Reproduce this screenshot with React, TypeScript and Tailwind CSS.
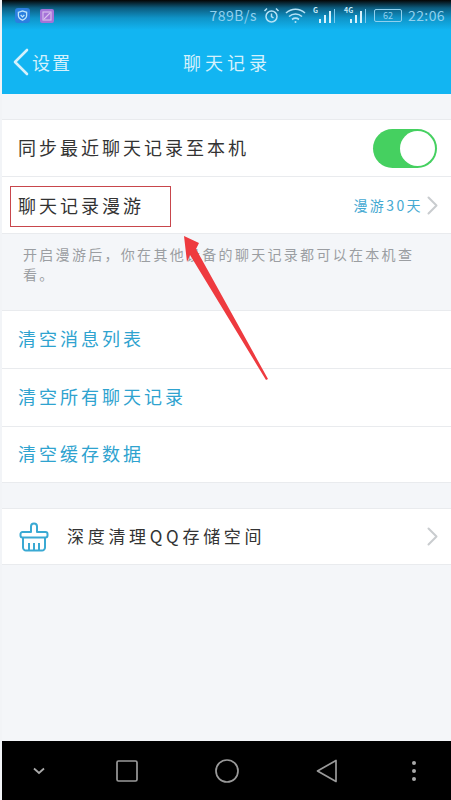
function Row({ children, h = 'h-[57px]' }: { children: React.ReactNode; h?: string }) {
  return (
    <div className={`flex items-center justify-between border-b border-[#e9ebee] bg-white pl-[16px] pr-[13px] ${h}`}>
      {children}
    </div>
  )
}

function Chevron() {
  return (
    <svg width="11" height="19" viewBox="0 0 11 19" fill="none" stroke="#c9cccf" strokeWidth="2" strokeLinecap="round" strokeLinejoin="round">
      <path d="M1.500 1.500 9.500 9.500 1.500 17.500" />
    </svg>
  )
}

function Signal({ label, className }: { label: string; className: string }) {
  return (
    <div className={`relative h-[17px] w-[23px] ${className}`}>
      <span className="absolute left-0 top-[-2px] text-[7px] font-bold leading-[10px] tracking-normal text-[#c5e9f8]">{label}</span>
      <svg className="absolute bottom-0 right-0" width="18" height="17" viewBox="0 0 18 17" fill="#d8f1fb">
        <rect x="1" y="12" width="2" height="4" />
        <rect x="6" y="8" width="2" height="8" />
        <rect x="11" y="4" width="2" height="12" />
        <rect x="16" y="2" width="1" height="14" fill="#7fcbee" />
      </svg>
    </div>
  )
}

function StatusBar() {
  return (
    <div className="flex h-[28px] items-center justify-between pl-[13px] pr-[6px] pt-[3px] text-[14px] tracking-normal text-[#8fd0ee]">
      <div className="flex items-center gap-[10px]">
        <div className="flex h-[15px] w-[15px] items-center justify-center rounded-[3px] bg-[#2b7fe0]">
          <svg width="11" height="11" viewBox="0 0 12 12" fill="none" stroke="#bfe6fb" strokeWidth="1.4">
            <path d="M1.5 2.500 6 1l4.500 1.500V6c0 2.500-2 4-4.500 5C3.500 10 1.500 8.500 1.500 6z" />
            <path d="M4 5.500 6 7.500 8 5.500" />
          </svg>
        </div>
        <div className="flex h-[14px] w-[14px] items-center justify-center rounded-[2px] bg-[#a572d8]">
          <svg width="10" height="10" viewBox="0 0 10 10" fill="none" stroke="#d9c2ee" strokeWidth="1.100">
            <rect x="1" y="1" width="8" height="8" />
            <path d="M2 8 8 2" />
          </svg>
        </div>
      </div>
      <div className="flex items-center">
        <span className="tracking-[0.5px]">789B/s</span>
        <svg className="ml-[6px]" width="17" height="17" viewBox="0 0 17 17" fill="none" stroke="#b5e2f6" strokeWidth="1.500">
          <circle cx="8.500" cy="9.500" r="5.500" />
          <path d="M8.500 6.500v3l2 1.500M1.500 4 4 1.500M15.500 4 13 1.500" />
        </svg>
        <svg className="ml-[5px]" width="21" height="17" viewBox="0 0 21 17" fill="none" stroke="#b5e2f6" strokeWidth="1.600">
          <path d="M1 6c5.500-5 13.500-5 19 0M4 9.500c3.800-3.300 9.200-3.300 13 0M7 12.500c2-1.500 5-1.500 7 0" />
          <circle cx="10.500" cy="15" r="1" fill="#b5e2f6" stroke="none" />
        </svg>
        <Signal label="G" className="ml-[7px]" />
        <Signal label="4G" className="ml-[8px]" />
        <div className="ml-[7px] flex h-[13px] w-[28px] items-center justify-center rounded-[2px] border border-[#8fd0ee] text-[9px] leading-none">62</div>
        <span className="ml-[6px] tracking-[0.4px]">22:06</span>
      </div>
    </div>
  )
}

function NavBar() {
  return (
    <div className="flex h-[59px] items-center bg-black pl-[30px]">
      <svg width="14" height="10" viewBox="0 0 14 10" fill="none" stroke="#a9a9a9" strokeWidth="1.800">
        <path d="M2 2.500 7 7l5-4.500" />
      </svg>
      <svg className="ml-[70px]" width="22" height="22" viewBox="0 0 22 22" fill="none" stroke="#9a9a9a" strokeWidth="1.700">
        <rect x="1" y="1" width="20" height="20" rx="1.500" />
      </svg>
      <svg className="ml-[77px]" width="24" height="24" viewBox="0 0 24 24" fill="none" stroke="#9a9a9a" strokeWidth="1.700">
        <circle cx="12" cy="12" r="11" />
      </svg>
      <svg className="ml-[77px]" width="22" height="24" viewBox="0 0 22 24" fill="none" stroke="#9a9a9a" strokeWidth="1.700" strokeLinejoin="round">
        <path d="M20 1.500v21L1.500 12z" />
      </svg>
      <div className="ml-[74px] flex flex-col gap-[4px]">
        <div className="h-[4px] w-[4px] rounded-full bg-[#a9a9a9]" />
        <div className="h-[4px] w-[4px] rounded-full bg-[#a9a9a9]" />
        <div className="h-[4px] w-[4px] rounded-full bg-[#a9a9a9]" />
      </div>
    </div>
  )
}

export default function App() {
  return (
    <div className="relative flex h-[800px] w-[451px] flex-col overflow-hidden border-l-2 border-[#f2f4f7] bg-[#f4f6f9] font-['Noto_Sans_CJK_SC',sans-serif] text-[18px] tracking-[3px] text-[#333]">
      {/* header */}
      <div className="h-[94px] bg-[#12b5f2] bg-[linear-gradient(to_bottom,#050505_0px,#0c5d80_8px,#0f94c8_18px,#12b5f2_30px)]">
        <StatusBar />
        <div className="relative mt-[12px] flex h-[44px] items-center justify-center">
          <div className="absolute left-[11px] flex items-center text-[#d5f1fc]">
            <svg width="16" height="28" viewBox="0 0 16 28" fill="none" stroke="#d5f1fc" strokeWidth="2.600" strokeLinecap="round" strokeLinejoin="round">
              <path d="M14 2 2 14l12 12" />
            </svg>
            <span className="ml-[3px] text-[18px] leading-none tracking-[2px]">设置</span>
          </div>
          <span className="ml-[1px] text-[18px] tracking-[4px] text-[#d5f1fc]">聊天记录</span>
        </div>
      </div>

      <div className="h-[26px] border-b border-[#e9ebee]" />
      <Row>
        <span className="-mt-[1px]">同步最近聊天记录至本机</span>
        <div className="mr-[1px] flex h-[39px] w-[64px] items-center justify-end rounded-full bg-[#45d060] p-[2px]">
          <div className="h-[35px] w-[35px] rounded-full bg-white" />
        </div>
      </Row>
      <Row>
        <span>聊天记录漫游</span>
        <div className="flex items-center text-[14px] tracking-[2.4px] text-[#45a9d2]">
          漫游30天
          <div className="ml-[4px]"><Chevron /></div>
        </div>
      </Row>

      <div className="h-[77px] border-b border-[#e9ebee] pl-[21px] pr-[14px] pt-[10px] text-[14px] leading-[20px] tracking-[2.3px] text-[#9b9ea2]">
        开启漫游后，你在其他设备的聊天记录都可以在本机查看。
      </div>

      <Row h="h-[58px]"><span className="-mt-[2px] text-[#2fa3cf]">清空消息列表</span></Row>
      <Row h="h-[58px]"><span className="-mt-[2px] text-[#2fa3cf]">清空所有聊天记录</span></Row>
      <Row h="h-[56px]"><span className="-mt-[2px] text-[#2fa3cf]">清空缓存数据</span></Row>

      <div className="h-[26px] border-b border-[#e9ebee]" />
      <Row h="h-[56px]">
        <div className="flex items-center">
          <svg width="32" height="32" viewBox="0 0 32 32" fill="none" stroke="#3aa9d3" strokeWidth="2" strokeLinejoin="round">
            <path d="M13 11V5.500a3 3 0 0 1 6 0V11h8.500a2 2 0 0 1 2 2v1.500a2 2 0 0 1-2 2h-23a2 2 0 0 1-2-2V13a2 2 0 0 1 2-2z" />
            <path d="M5 16.500v10a3 3 0 0 0 3 3h16a3 3 0 0 0 3-3v-10M11 22v7.500M16 22v7.500M21 22v7.500" />
          </svg>
          <span className="ml-[17px] -mt-[1px] text-[17px] tracking-[3.7px]">深度清理QQ存储空间</span>
        </div>
        <Chevron />
      </Row>

      <div className="flex-1" />
      <NavBar />

      {/* red annotation drawn over the screenshot */}
      <div className="absolute left-[8px] top-[186px] h-[41px] w-[161px] border border-[#c8464c]" />
      <svg className="absolute left-[-2px] top-0" width="451" height="800" viewBox="0 0 451 800">
        <path d="M184 236 199 243 196 249 268 379 266 380 190 255 187 262z" fill="#ee3a3f" />
      </svg>
    </div>
  )
}
